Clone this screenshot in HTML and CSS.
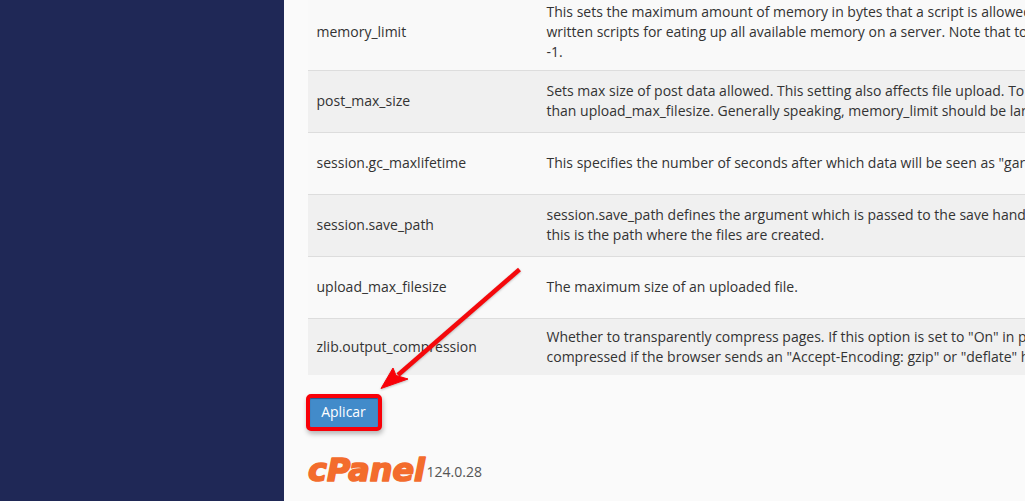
FILE: index.html
```html
<!DOCTYPE html>
<html lang="es">
<head>
<meta charset="utf-8">
<title>cPanel</title>
<link rel="stylesheet" href="styles.css">
</head>
<body>
<div class="app">
  <aside class="sidebar"></aside>
  <main class="main">
    <div class="options">
      <div class="row row-first"><div class="name">memory_limit</div><div class="desc">This sets the maximum amount of memory in bytes that a script is allowed<br>written scripts for eating up all available memory on a server. Note that to<br>-1.</div></div>
      <div class="row row-alt"><div class="name">post_max_size</div><div class="desc">Sets max size of post data allowed. This setting also affects file upload. To<br>than upload_max_filesize. Generally speaking, memory_limit should be larger</div></div>
      <div class="row"><div class="name">session.gc_maxlifetime</div><div class="desc">This specifies the number of seconds after which data will be seen as "garbage"</div></div>
      <div class="row row-alt"><div class="name">session.save_path</div><div class="desc">session.save_path defines the argument which is passed to the save handler.<br>this is the path where the files are created.</div></div>
      <div class="row"><div class="name">upload_max_filesize</div><div class="desc">The maximum size of an uploaded file.</div></div>
      <div class="row row-alt row-last"><div class="name">zlib.output_compression</div><div class="desc">Whether to transparently compress pages. If this option is set to "On" in php<br>compressed if the browser sends an "Accept-Encoding: gzip" or "deflate" header</div></div>
    </div>
    <button class="apply" type="button">Aplicar</button>
    <footer class="footer">
      <svg class="logo" width="119" height="32" viewBox="0 0 119 32" role="img" aria-label="cPanel">
        <text class="wordmark" x="0" y="26.500" textLength="117" lengthAdjust="spacingAndGlyphs">cPanel</text>
      </svg>
      <span class="version">124.0.28</span>
    </footer>
  </main>
</div>
<svg class="arrow" width="150" height="132" viewBox="0 0 150 132">
  <path class="shaft" d="M143.500 9.500L22 115"/>
  <path class="head" d="M5 128.500L17 108L20 115.500L32 119Z"/>
</svg>
</body>
</html>
```

FILE: styles.css
```css
* { box-sizing: border-box; }
body {
  margin: 0;
  overflow: hidden;
  background: #fafafa;
  color: #333;
  font: 14px/20px "Open Sans", sans-serif;
}
.app { display: flex; height: 501px; }
.sidebar { flex: 0 0 284px; background: #1f2856; }
.main { flex: 1; min-width: 0; padding-left: 24px; overflow: hidden; }
.row {
  display: grid;
  grid-template-columns: 230px 1fr;
  align-items: center;
  height: 62px;
  padding: 0 0 1px 8.5px;
  border-top: 1px solid #ddd;
  background: #f9f9f9;
}
.row-first { height: 70px; border-top: 0; align-items: start; padding-top: 2px; }
.row-first .name { padding-top: 20px; }
.row-alt { background: #f0f0f0; }
.row-last { height: 57px; padding-bottom: 0; }
.desc { white-space: nowrap; }
.apply {
  display: block;
  width: 76px;
  height: 37px;
  margin: 19px 0 0 -2px;
  padding: 0 1px 2px 0;
  border: 4px solid #f80008;
  border-radius: 5px;
  background: #428bca;
  color: #fff;
  font: inherit;
  box-shadow: 1px 3px 5px rgba(0, 0, 0, .28), inset 0 1px 1px #24538c;
}
.footer { display: flex; align-items: flex-start; margin-top: 23px; }
.logo { display: block; flex: none; overflow: visible; }
.wordmark { fill: #f36c2d; stroke: #f36c2d; stroke-width: 1.7; stroke-linejoin: round; font: italic 700 32.5px "DejaVu Sans", sans-serif; }
.version { padding-top: 8px; margin-left: -.5px; color: #555; }
.arrow { position: absolute; left: 376px; top: 260px; filter: drop-shadow(0 1px 1px rgba(0, 0, 0, .25)); }
.shaft { fill: none; stroke: #f4090c; stroke-width: 4.5; }
.head { fill: #f80008; stroke: #f80008; stroke-width: 1; }
```
